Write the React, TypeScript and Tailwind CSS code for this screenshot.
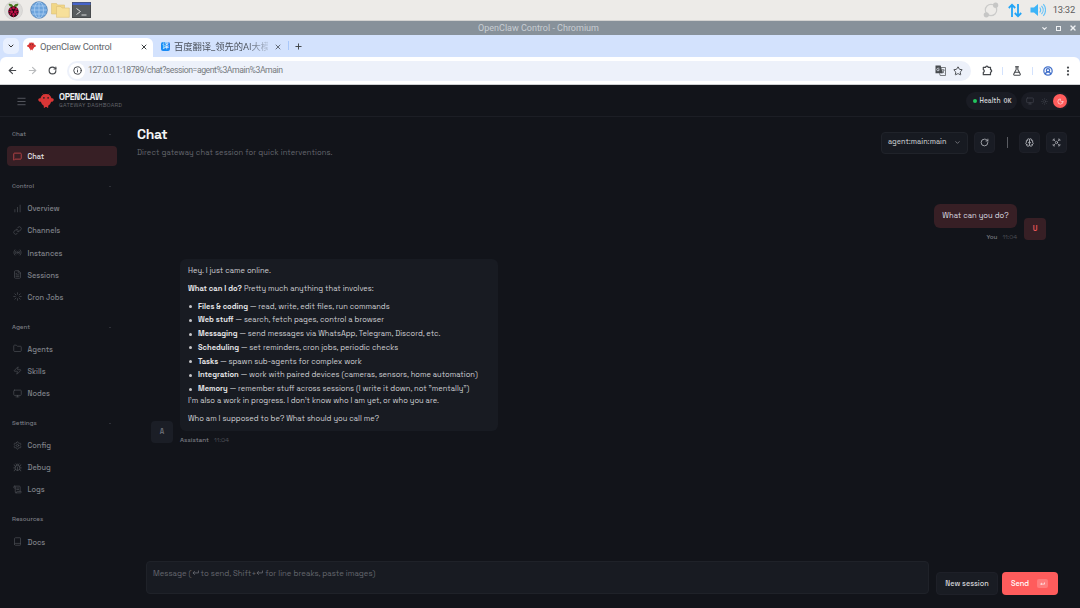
import type { ReactNode } from 'react';
import {
  ArrowLeft, ArrowRight, ChartNoAxesColumnIncreasing, Book, Brain, Bug, ChevronDown, CircleUserRound,
  EllipsisVertical, FileText, FlaskConical, Folder, Info, Link, Loader, Menu,
  MessageSquare, Monitor, Moon, Plus, Radio, RotateCw, ScrollText, Settings, Star, Sun, X, Zap,
} from 'lucide-react';
import type { LucideIcon } from 'lucide-react';

function RaspberryIcon() {
  return (
    <svg width="19" height="19" viewBox="0 0 19 19">
      <circle cx="9.5" cy="9.5" r="9" fill="#dddcda" stroke="#cbcac8" strokeWidth=".6" />
      <path d="M9.5 5.6C8.4 3 6.2 2.6 4.6 3c.3 2 1.800 3.200 4.900 3.100C12.600 6.200 14.100 5 14.400 3c-1.600-.4-3.800 0-4.900 2.600z" fill="#4a7c22" />
      <path d="M9.500 5.500c3 0 5.200 2.100 5.200 5.300 0 3.100-2.700 5.300-5.200 5.500-2.500-.2-5.200-2.400-5.200-5.500 0-3.200 2.200-5.300 5.200-5.300z" fill="#2c0612" />
      <g fill="#bd1148">
        <circle cx="9.500" cy="6.900" r="1.300" /><circle cx="6.500" cy="8" r="1.250" /><circle cx="12.500" cy="8" r="1.250" />
        <circle cx="7.600" cy="10.800" r="1.500" /><circle cx="11.400" cy="10.800" r="1.500" />
        <circle cx="9.500" cy="13.500" r="1.400" /><circle cx="6.300" cy="13" r="1.100" /><circle cx="12.700" cy="13" r="1.100" />
        <circle cx="5" cy="10.500" r=".8" /><circle cx="14" cy="10.500" r=".8" /><circle cx="9.500" cy="15.600" r=".7" />
      </g>
    </svg>
  );
}

function GlobeIcon() {
  return (
    <svg width="18" height="18" viewBox="0 0 18 18">
      <circle cx="9" cy="9" r="8.300" fill="#6ba3dc" stroke="#5180b4" strokeWidth=".8" />
      <g fill="none" stroke="#a9cdf1" strokeWidth=".8">
        <path d="M1 9h16M9 1v16M2.500 5h13M2.500 13h13" />
        <ellipse cx="9" cy="9" rx="4.500" ry="8" />
      </g>
    </svg>
  );
}

function FilesIcon() {
  return (
    <svg width="19" height="16" viewBox="0 0 19 16">
      <path d="M.5 1.500h5l1 1.500h7v9h-13z" fill="#f1d787" stroke="#dcc078" strokeWidth=".6" />
      <path d="M5.500 4.500h4.500l1 1.500h7.300v9.300H5.500z" fill="#f7e09a" stroke="#dcc078" strokeWidth=".6" />
    </svg>
  );
}

function TerminalIcon() {
  return (
    <svg width="19" height="16" viewBox="0 0 19 16">
      <rect x=".5" y=".5" width="18" height="15" fill="#585c5f" stroke="#474a4c" />
      <path d="M.5.5h18v2.500H.5z" fill="#4563c9" />
      <path d="M4.500 6.500l4 3-4 3M9.500 13h5" fill="none" stroke="#d8dadb" />
    </svg>
  );
}

function ClawLogo({ size }: { size: number }) {
  return (
    <svg width={size} height={size} viewBox="0 0 16 16">
      <path d="M8 1c3.200 0 5.100 2 5.500 4.300 1.200-.5 2.400.3 2.200 1.600-.2 1.200-1.300 2-2.600 1.800-.5 1.900-1.600 3.200-2.900 4v2.100H8.900v-.9H7.100v.9H5.800v-2.100c-1.300-.8-2.400-2.100-2.900-4C1.600 8.900.5 8.100.3 6.900.1 5.600 1.300 4.800 2.500 5.300 2.900 3 4.800 1 8 1z" fill="#d93636" />
      <path d="M5.800 1.800 4.600.6M10.200 1.800 11.400.6" stroke="#c43434" strokeWidth=".7" />
      <circle cx="5.900" cy="4.900" r=".8" fill="#171d22" /><circle cx="10.100" cy="4.900" r=".8" fill="#171d22" />
    </svg>
  );
}

function SyncIcon() {
  return (
    <svg width="16" height="16" viewBox="0 0 16 16">
      <circle cx="8" cy="8" r="5.700" fill="none" stroke="#cbcbca" strokeWidth="1.200" />
      <circle cx="12.600" cy="3.200" r="2.600" fill="#c6c6c5" /><circle cx="3.300" cy="12.800" r="2.600" fill="#c6c6c5" />
    </svg>
  );
}

function TransferIcon() {
  return (
    <svg width="14" height="15" viewBox="0 0 14 15" fill="none" stroke="#22a5f7" strokeWidth="1.800">
      <path d="M4 14V1.800M.8 5 4 1.700 7.200 5M10 1v12.200M6.800 10l3.200 3.300 3.200-3.300" />
    </svg>
  );
}

function VolumeIcon() {
  return (
    <svg width="16" height="14" viewBox="0 0 16 14">
      <path d="M.5 4.500H4L8 1v12L4 9.500H.5z" fill="#3db4f7" />
      <path d="M9.700 4.500c1.200 1.500 1.200 3.500 0 5M11.500 2.800c2.200 2.400 2.200 6 0 8.400M13.300 1.200c3 3.300 3 8.300 0 11.600" fill="none" stroke="#67c3f8" strokeWidth="1.200" />
    </svg>
  );
}

function TranslateIcon() {
  return (
    <svg width="11" height="11" viewBox="0 0 11 11">
      <path d="M.5.500h5.200l2 7.700H.5z" fill="#474b4f" />
      <path d="M6 2.500h4.500v8H5.200l-.7-2.300M6.300 5h3.200M8 4v1M9 5c-.2 1.500-1.200 2.600-2.200 3.200M7 6.200l2 2" fill="none" stroke="#5b5f63" strokeWidth=".8" />
      <path d="M4.400 3.200H3a1.300 1.300 0 1 0 1.300 1.500H3.200" fill="none" stroke="#e8edf7" strokeWidth=".7" />
    </svg>
  );
}

function ExtensionIcon() {
  return (
    <svg width="11" height="11" viewBox="0 0 11 11" fill="none" stroke="#44474b" strokeWidth="1.200" strokeLinejoin="round">
      <path d="M1.300 2.300h2.400a1.200 1.200 0 0 1 2.400 0h2.400v2.400a1.200 1.200 0 0 1 0 2.400v2.600H1.300V7.400a1.400 1.400 0 0 0 0-2.700z" />
    </svg>
  );
}

function ReturnArrow({ width }: { width: number }) {
  return (
    <svg width={width} height={width * 0.7} viewBox="0 0 10 7" fill="none" stroke="currentColor" strokeWidth="1.300">
      <path d="M9.200.8v3.400H1.500M4 1.700 1.300 4.200 4 6.700" />
    </svg>
  );
}

function DesktopBar() {
  return (
    <div className="flex h-[21px] shrink-0 items-center border-b border-[#d3d3d1] bg-[#edebe8] pr-[5px] pl-[4px]">
      <RaspberryIcon />
      <div className="ml-[7px]"><GlobeIcon /></div>
      <div className="ml-[3px]"><FilesIcon /></div>
      <div className="ml-[2px]"><TerminalIcon /></div>
      <div className="ml-auto flex items-center">
        <SyncIcon />
        <div className="ml-[9px]"><TransferIcon /></div>
        <div className="ml-[8px]"><VolumeIcon /></div>
        <span className="ml-[7px] pt-[1px] font-[Roboto,sans-serif] text-[9.400px] tracking-[-0.200px] text-[#5c5c5c]">13:32</span>
      </div>
    </div>
  );
}

function WindowTitle() {
  return (
    <div className="grid h-[14px] shrink-0 grid-cols-[1fr_auto_1fr] items-center bg-[#87919a] font-[Roboto,sans-serif] text-[#c7cdd2]">
      <span />
      <span className="mr-[3px] text-[9px] leading-[14px]">OpenClaw Control - Chromium</span>
      <div className="flex items-center justify-end gap-[7px] pr-[3px] text-[#eef0f2]">
        <ChevronDown size={7} strokeWidth={4} />
        <span className="mx-[1px] h-[5px] w-[5px] border-[1.500px] border-[#eef0f2]" />
        <X size={8} strokeWidth={4} />
      </div>
    </div>
  );
}

function TabStrip() {
  return (
    <div className="flex h-[22px] shrink-0 items-end bg-[#d3e2fd] pl-[3px] font-[Roboto,'Noto_Sans_CJK_SC',sans-serif]">
      <div className="mb-[3px] flex h-[16px] w-[16px] items-center justify-center rounded-[5px] bg-[#e9f0fe] text-[#333]">
        <ChevronDown size={8} strokeWidth={3} />
      </div>
      <div className="ml-[4px] flex h-[19px] w-[130px] items-center rounded-t-[6px] bg-white pr-[5px] pb-[2px] pl-[4px]">
        <ClawLogo size={9} />
        <span className="ml-[4px] pt-[1px] text-[9.400px] tracking-[-0.220px] text-[#62666b]">OpenClaw Control</span>
        <X className="ml-auto text-[#3c4043]" size={8} strokeWidth={3} />
      </div>
      <div className="flex h-[19px] w-[136px] items-center pb-[2px] pl-[8px]">
        <span className="flex h-[9px] w-[9px] items-center justify-center rounded-[2px] bg-[#188af5] text-[7px] leading-[9px] text-white">译</span>
        <span className="ml-[4px] w-[94px] bg-linear-to-r from-[#454b54] from-75% to-[#454b54]/20 bg-clip-text text-[9.400px] leading-[14px] tracking-[-0.100px] whitespace-nowrap text-transparent">百度翻译_领先的AI大模</span>
        <X className="ml-[6px] text-[#4c545e]" size={8} strokeWidth={2.500} />
      </div>
      <span className="mb-[7px] ml-[-1px] h-[9px] w-[1px] bg-[#a8c7fa]" />
      <Plus className="mb-[6px] ml-[5px] text-[#3c4043]" size={9} strokeWidth={2.500} />
    </div>
  );
}

function AddressBar() {
  return (
    <div className="bg-[#d3e2fd]">
      <div className="flex h-[28px] items-center rounded-t-[6px] border-b border-[#cfd1d4] bg-white pr-[6px] pl-[7px] text-[#44474b]">
        <ArrowLeft size={11} strokeWidth={2.400} />
        <ArrowRight className="ml-[9px] text-[#b9bbbd]" size={11} strokeWidth={2.400} />
        <RotateCw className="ml-[10px]" size={9} strokeWidth={3} />
        <div className="ml-[10px] flex h-[20px] w-[904px] items-center rounded-full bg-[#edf1fa] pr-[8px] pl-[2px]">
          <span className="flex h-[16px] w-[16px] items-center justify-center rounded-full bg-white"><Info size={9} strokeWidth={2.600} /></span>
          <span className="ml-[3px] pt-[1px] font-[Roboto,sans-serif] text-[8.700px] tracking-[-0.450px] text-[#777b80]">127.0.0.1:18789/chat?session=agent%3Amain%3Amain</span>
          <span className="ml-auto"><TranslateIcon /></span>
          <Star className="ml-[7px]" size={10} strokeWidth={2.300} />
        </div>
        <div className="ml-auto flex items-center">
          <ExtensionIcon />
          <span className="mx-[9px] h-[8px] w-[1px] bg-[#d3e2fd]" />
          <FlaskConical size={10} strokeWidth={2.500} />
          <span className="mx-[10px] h-[8px] w-[1px] bg-[#d3e2fd]" />
          <CircleUserRound className="text-[#4371ca]" size={10} strokeWidth={3} />
          <EllipsisVertical className="ml-[9px]" size={12} strokeWidth={2.500} />
        </div>
      </div>
    </div>
  );
}

function AppHeader() {
  return (
    <header className="flex h-[32px] shrink-0 items-center border-b border-[#1c1e25] pt-[1px] pr-[11px] pl-[16px]">
      <Menu className="text-[#60626a]" size={11} strokeWidth={1.800} />
      <div className="ml-[11px]"><ClawLogo size={16} /></div>
      <div className="ml-[5px] flex flex-col">
        <span className="text-[8.800px] leading-[9px] font-bold tracking-[-0.270px] text-[#f0f0f2]">OPENCLAW</span>
        <span className="text-[5.600px] leading-[7px] tracking-[0.300px] text-[#62646b]">GATEWAY DASHBOARD</span>
      </div>
      <div className="ml-auto flex h-[18px] w-[51px] items-center rounded-full bg-[#1a1c24] pl-[7px]">
        <span className="h-[3.500px] w-[3.500px] rounded-full bg-[#22c55e]" />
        <span className="ml-[3px] text-[6.700px] font-medium text-[#d4d4d8]">Health</span>
        <span className="ml-[3px] font-['Liberation_Mono',monospace] text-[6.700px] font-bold tracking-[-0.100px] text-[#b9b9bd]">OK</span>
      </div>
      <div className="ml-[4px] flex h-[18px] w-[48px] items-center rounded-full bg-[#1a1c24] pr-[2px] pl-[5px] text-[#42454e]">
        <Monitor size={8} />
        <Sun className="ml-[7px]" size={7} />
        <span className="ml-auto flex h-[14px] w-[14px] items-center justify-center rounded-full bg-[#ff5c5c] text-white"><Moon size={7} strokeWidth={2} /></span>
      </div>
    </header>
  );
}

type NavEntry = { label: string; icon: LucideIcon; active?: boolean };

const sections: { title: string; collapsible: boolean; items: NavEntry[] }[] = [
  { title: 'Chat', collapsible: true, items: [{ label: 'Chat', icon: MessageSquare, active: true }] },
  {
    title: 'Control', collapsible: true, items: [
      { label: 'Overview', icon: ChartNoAxesColumnIncreasing }, { label: 'Channels', icon: Link },
      { label: 'Instances', icon: Radio }, { label: 'Sessions', icon: FileText }, { label: 'Cron Jobs', icon: Loader },
    ],
  },
  {
    title: 'Agent', collapsible: true, items: [
      { label: 'Agents', icon: Folder }, { label: 'Skills', icon: Zap }, { label: 'Nodes', icon: Monitor },
    ],
  },
  {
    title: 'Settings', collapsible: true, items: [
      { label: 'Config', icon: Settings }, { label: 'Debug', icon: Bug }, { label: 'Logs', icon: ScrollText },
    ],
  },
  { title: 'Resources', collapsible: false, items: [{ label: 'Docs', icon: Book }] },
];

function Sidebar() {
  return (
    <nav className="flex w-[124px] shrink-0 flex-col gap-[9.800px] pt-[7px] pr-[7px] pl-[7px]">
      {sections.map((section) => (
        <div key={section.title} className="flex flex-col gap-[1.600px]">
          <div className="flex h-[20.300px] items-center justify-between pt-[0.500px] pr-[6px] pl-[5px] text-[6.200px] font-medium text-[#7b7d84]">
            <span>{section.title}</span>
            {section.collapsible && <span className="h-[1px] w-[2px] bg-[#2e3037]" />}
          </div>
          {section.items.map(({ label, icon: Icon, active }) => (
            <div key={label} className={active ? 'flex h-[20.500px] items-center rounded-[4px] bg-[#371f25] pl-[6px]' : 'flex h-[20.500px] items-center pl-[6px]'}>
              <Icon className={active ? 'text-[#d64d50]' : 'text-[#4e5057]'} size={9} strokeWidth={active ? 2 : 1.800} />
              <span className={active ? 'ml-[5.500px] pt-[1.200px] text-[7.400px] font-medium text-[#e4e4e7]' : 'ml-[5.500px] pt-[1.200px] text-[7.400px] font-medium text-[#7f8188]'}>{label}</span>
            </div>
          ))}
        </div>
      ))}
    </nav>
  );
}

function ToolButton({ children }: { children: ReactNode }) {
  return <button className="flex h-[21px] w-[21px] items-center justify-center rounded-[4px] border border-[#1e2028] bg-[#191c24] text-[#b4b6bc]">{children}</button>;
}

function PageHeader() {
  return (
    <div className="flex items-start justify-between pr-[13px] pl-[13px]">
      <div className="flex flex-col pt-[8px]">
        <h1 className="text-[14px] leading-[18px] font-bold tracking-[-0.300px] text-[#f4f4f5]">Chat</h1>
        <p className="mt-[4px] text-[7.600px] leading-[11px] tracking-[0.080px] text-[#65676e]">Direct gateway chat session for quick interventions.</p>
      </div>
      <div className="flex items-center pt-[14.500px]">
        <div className="flex h-[22px] w-[87px] items-center justify-between rounded-[4px] border border-[#20232a] bg-[#171a21] pr-[6px] pl-[6px]">
          <span className="text-[7.300px] font-medium text-[#b8babf]">agent:main:main</span>
          <ChevronDown className="text-[#8c8e94]" size={7} strokeWidth={2.500} />
        </div>
        <div className="ml-[6px]"><ToolButton><RotateCw size={9} strokeWidth={2.200} /></ToolButton></div>
        <span className="mx-[11.500px] h-[11px] w-[1px] bg-[#5a5c62]" />
        <ToolButton><Brain size={9} strokeWidth={2.200} /></ToolButton>
        <div className="ml-[6px]">
          <ToolButton>
            <svg width="9" height="9" viewBox="0 0 24 24" fill="none" stroke="currentColor" strokeWidth="2" strokeLinecap="round">
              <path d="M3 7V5a2 2 0 0 1 2-2h2M17 3h2a2 2 0 0 1 2 2v2M21 17v2a2 2 0 0 1-2 2h-2M7 21H5a2 2 0 0 1-2-2v-2M5 5l3 3M19 5l-3 3M5 19l3-3M19 19l-3-3" /><circle cx="12" cy="12" r="3" />
            </svg>
          </ToolButton>
        </div>
      </div>
    </div>
  );
}

const abilities = [
  ['Files & coding', 'read, write, edit files, run commands'],
  ['Web stuff', 'search, fetch pages, control a browser'],
  ['Messaging', 'send messages via WhatsApp, Telegram, Discord, etc.'],
  ['Scheduling', 'set reminders, cron jobs, periodic checks'],
  ['Tasks', 'spawn sub-agents for complex work'],
  ['Integration', 'work with paired devices (cameras, sensors, home automation)'],
  ['Memory', 'remember stuff across sessions (I write it down, not "mentally")'],
];

function Thread() {
  return (
    <div className="flex flex-1 flex-col pr-[34px] pl-[27px]">
      <div className="mt-[46px] flex items-start justify-end">
        <div className="flex flex-col items-end">
          <div className="flex h-[24px] w-[83px] items-center justify-center rounded-[6px] bg-[#371f25] text-[7.600px] text-[#dcdce0]">What can you do?</div>
          <div className="mt-[5px] flex gap-[5px] text-[6.200px] leading-[9px] text-[#4d4f56]"><span className="font-medium text-[#7b7d84]">You</span><span>11:04</span></div>
        </div>
        <div className="mt-[14px] ml-[7px] flex h-[22px] w-[22px] items-center justify-center rounded-[4px] bg-[#371f25] text-[7px] font-semibold text-[#ec5558]">U</div>
      </div>
      <div className="mt-[17px] flex items-end">
        <div className="mb-[2px] flex h-[22px] w-[22px] items-center justify-center rounded-[4px] bg-[#1b1e26] text-[7px] font-semibold text-[#686b73]">A</div>
        <div className="ml-[7px] flex flex-col">
          <div className="h-[172px] w-[318px] rounded-[6px] bg-[#181b22] px-[8px] pt-[5.500px] text-[7.560px] leading-[12px] whitespace-nowrap text-[#cfcfd3]">
            <p>Hey. I just came online.</p>
            <p className="mt-[6px]"><strong className="font-semibold text-[#e4e4e7]">What can I do?</strong> Pretty much anything that involves:</p>
            <ul className="mt-[6px] flex flex-col gap-[1.750px]">
              {abilities.map(([name, detail]) => (
                <li key={name} className="flex items-center">
                  <span className="mr-[6px] ml-[1px] h-[3px] w-[3px] rounded-full bg-[#c6c6ca]" />
                  <span><strong className="font-semibold text-[#e4e4e7]">{name}</strong> — {detail}</span>
                </li>
              ))}
            </ul>
            <p>I'm also a work in progress. I don't know who I am yet, or who you are.</p>
            <p className="mt-[6px]">Who am I supposed to be? What should you call me?</p>
          </div>
          <div className="mt-[4px] flex gap-[5px] text-[6.400px] leading-[10px] text-[#4d4f56]"><span className="font-medium text-[#7b7d84]">Assistant</span><span>11:04</span></div>
        </div>
      </div>
    </div>
  );
}

function Composer() {
  return (
    <div className="flex items-end pr-[22px] pb-[13px] pl-[22px]">
      <div className="mb-[1px] flex h-[33px] w-[783px] items-start rounded-[4px] border border-[#1f2229] bg-[#181b22] px-[6px] pt-[5px] text-[7.800px] leading-[12px] text-[#65676e]">
        <span>Message (</span>
        <span className="pt-[3px]"><ReturnArrow width={7} /></span>
        <span className="whitespace-pre"> to send, Shift+</span>
        <span className="pt-[3px]"><ReturnArrow width={7} /></span>
        <span className="whitespace-pre"> for line breaks, paste images)</span>
      </div>
      <button className="ml-[7px] h-[23px] w-[62px] rounded-[4px] border border-[#1e2028] bg-[#191c23] pt-[1px] text-[7.300px] font-medium text-[#d4d4d8]">New session</button>
      <button className="ml-[4px] flex h-[23px] w-[56px] items-center rounded-[4px] bg-[#ff5c5c] pl-[9px] text-[7.400px] font-medium text-white">
        <span className="pt-[1px]">Send</span>
        <span className="ml-[8px] flex h-[9px] w-[11px] items-center justify-center rounded-[2px] bg-[#ff7c7c]"><ReturnArrow width={5} /></span>
      </button>
    </div>
  );
}

export default function App() {
  return (
    <div className="flex h-[608px] w-[1080px] flex-col overflow-hidden bg-[#12141a]">
      <DesktopBar />
      <WindowTitle />
      <TabStrip />
      <AddressBar />
      <div className="flex min-h-0 flex-1 flex-col font-['Space_Grotesk',Inter,sans-serif]">
        <AppHeader />
        <div className="flex min-h-0 flex-1">
          <Sidebar />
          <main className="flex min-w-0 flex-1 flex-col">
            <PageHeader />
            <Thread />
            <Composer />
          </main>
        </div>
      </div>
    </div>
  );
}
